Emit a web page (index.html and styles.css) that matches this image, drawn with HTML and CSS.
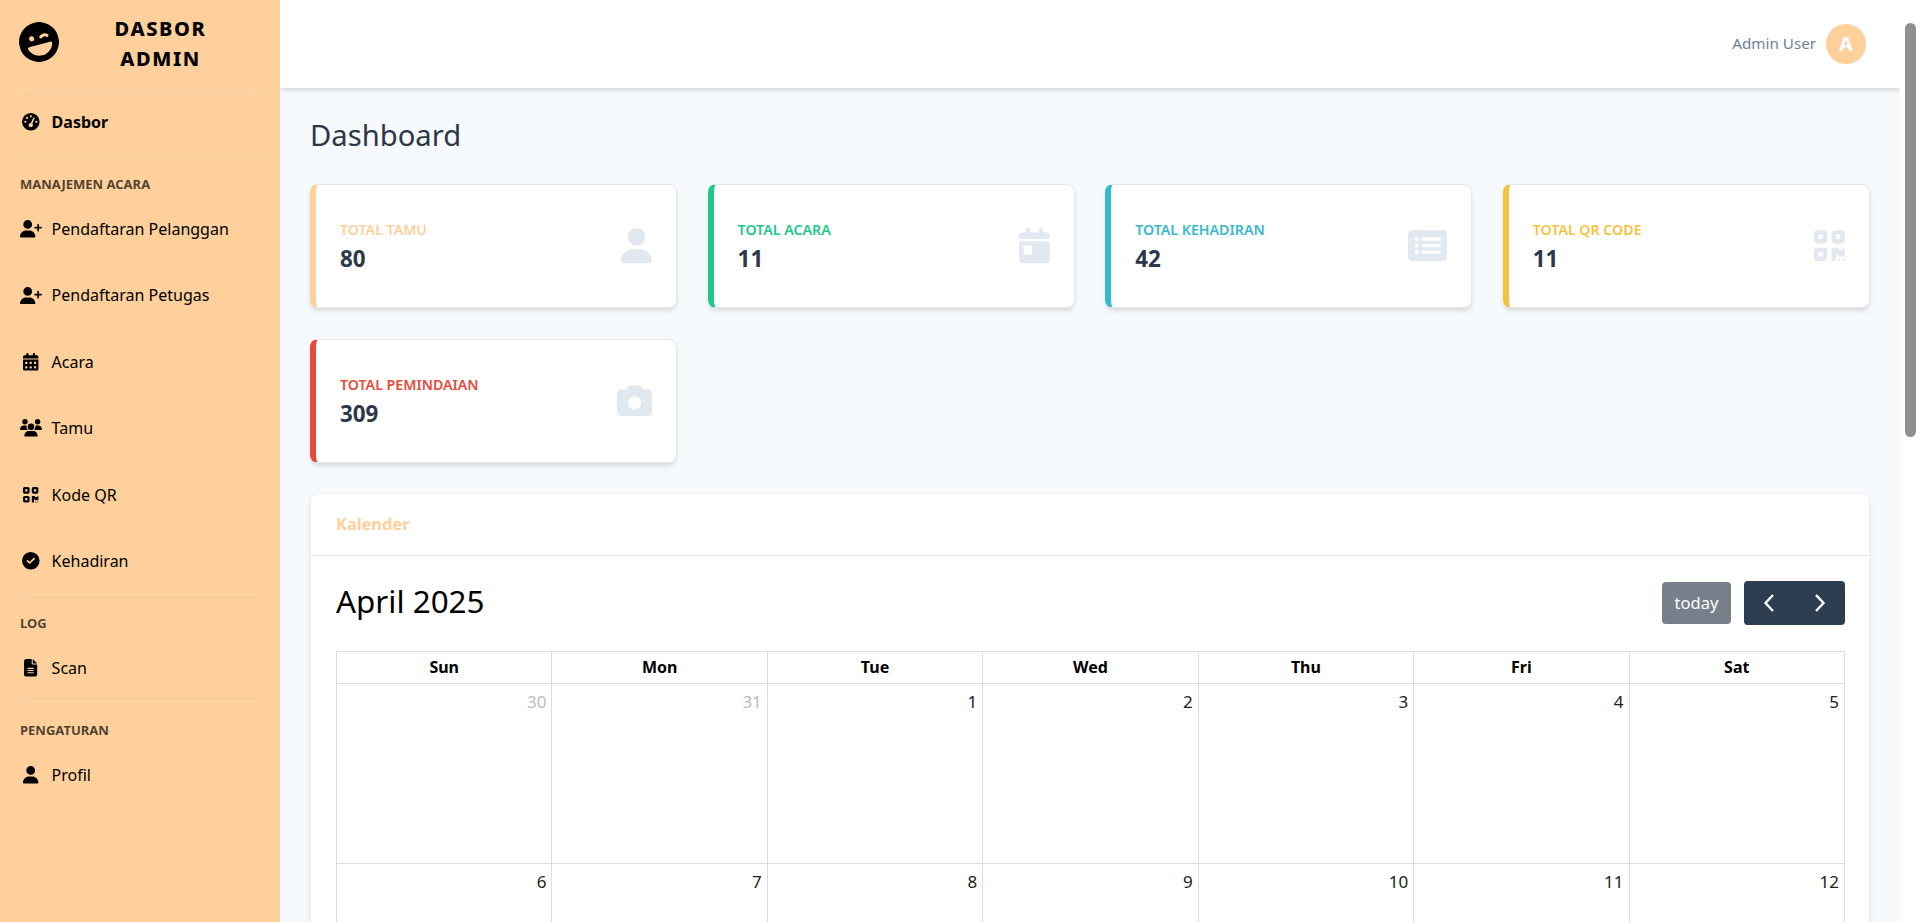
FILE: index.html
```html
<!DOCTYPE html>
<html lang="en">
<head>
  <meta charset="UTF-8">
  <title>Dasbor Admin</title>
  <link rel="stylesheet" href="styles.css">
</head>
<body>
  <aside class="sidebar">
    <a class="brand" href="#">
      <svg class="brand-icon" viewBox="0 0 512 512"><path d="M256 512A256 256 0 1 0 256 0a256 256 0 1 0 0 512zM96.8 314.1c-3.8-13.7 7.4-26.1 21.6-26.1H393.6c14.2 0 25.5 12.4 21.6 26.1C396.2 382 332.1 432 256 432s-140.2-50-159.2-117.9zM144.4 192a32 32 0 1 1 64 0 32 32 0 1 1 -64 0zm165.8 21.7c-7.6 8.1-20.2 8.5-28.3 .9s-8.5-20.2-.9-28.3c14.5-15.5 35.2-22.3 54.6-22.3s40.1 6.8 54.6 22.3c7.6 8.1 7.1 20.7-.9 28.3s-20.7 7.1-28.3-.9c-5.5-5.8-14.8-9.7-25.4-9.7s-19.9 3.8-25.4 9.7z"/></svg>
      <span class="brand-text">DASBOR ADMIN</span>
    </a>
    <hr class="divider">
    <a class="nav-link active" href="#">
      <span class="nav-icon"><svg viewBox="0 0 512 512"><path d="M0 256a256 256 0 1 1 512 0A256 256 0 1 1 0 256zM288 96a32 32 0 1 0 -64 0 32 32 0 1 0 64 0zM256 416c35.3 0 64-28.7 64-64c0-17.4-6.9-33.1-18.1-44.6L366 161.7c5.3-12.1-.2-26.3-12.3-31.6s-26.3 .2-31.6 12.3L257.9 288c-.6 0-1.3 0-1.9 0c-35.3 0-64 28.7-64 64s28.7 64 64 64zM176 144a32 32 0 1 0 -64 0 32 32 0 1 0 64 0zM96 288a32 32 0 1 0 0-64 32 32 0 1 0 0 64zm352-32a32 32 0 1 0 -64 0 32 32 0 1 0 64 0z"/></svg></span>
      Dasbor
    </a>
    <hr class="divider">
    <div class="nav-heading">MANAJEMEN ACARA</div>
    <a class="nav-link" href="#">
      <span class="nav-icon"><svg viewBox="0 0 640 512"><path d="M96 128a128 128 0 1 1 256 0A128 128 0 1 1 96 128zM0 482.3C0 383.8 79.8 304 178.3 304h91.4C368.2 304 448 383.8 448 482.3c0 16.4-13.3 29.7-29.7 29.7H29.7C13.3 512 0 498.7 0 482.3zM504 312V248H440c-13.3 0-24-10.7-24-24s10.7-24 24-24h64V136c0-13.3 10.7-24 24-24s24 10.7 24 24v64h64c13.3 0 24 10.7 24 24s-10.7 24-24 24H552v64c0 13.3-10.7 24-24 24s-24-10.7-24-24z"/></svg></span>
      Pendaftaran Pelanggan
    </a>
    <a class="nav-link" href="#">
      <span class="nav-icon"><svg viewBox="0 0 640 512"><path d="M96 128a128 128 0 1 1 256 0A128 128 0 1 1 96 128zM0 482.3C0 383.8 79.8 304 178.3 304h91.4C368.2 304 448 383.8 448 482.3c0 16.4-13.3 29.7-29.7 29.7H29.7C13.3 512 0 498.7 0 482.3zM504 312V248H440c-13.3 0-24-10.7-24-24s10.7-24 24-24h64V136c0-13.3 10.7-24 24-24s24 10.7 24 24v64h64c13.3 0 24 10.7 24 24s-10.7 24-24 24H552v64c0 13.3-10.7 24-24 24s-24-10.7-24-24z"/></svg></span>
      Pendaftaran Petugas
    </a>
    <a class="nav-link" href="#">
      <span class="nav-icon"><svg viewBox="0 0 448 512"><path d="M128 0c17.7 0 32 14.3 32 32V64H288V32c0-17.7 14.3-32 32-32s32 14.3 32 32V64h48c26.5 0 48 21.5 48 48v48H0V112C0 85.5 21.5 64 48 64H96V32c0-17.7 14.3-32 32-32zM0 192H448V464c0 26.5-21.5 48-48 48H48c-26.5 0-48-21.5-48-48V192zm64 80v32c0 8.8 7.2 16 16 16h32c8.8 0 16-7.2 16-16V272c0-8.8-7.2-16-16-16H80c-8.8 0-16 7.2-16 16zm128 0v32c0 8.8 7.2 16 16 16h32c8.8 0 16-7.2 16-16V272c0-8.8-7.2-16-16-16H208c-8.8 0-16 7.2-16 16zm144-16c-8.8 0-16 7.2-16 16v32c0 8.8 7.2 16 16 16h32c8.8 0 16-7.2 16-16V272c0-8.8-7.2-16-16-16H336zM64 400v32c0 8.8 7.2 16 16 16h32c8.8 0 16-7.2 16-16V400c0-8.8-7.2-16-16-16H80c-8.8 0-16 7.2-16 16zm144-16c-8.8 0-16 7.2-16 16v32c0 8.8 7.2 16 16 16h32c8.8 0 16-7.2 16-16V400c0-8.8-7.2-16-16-16H208zm112 16v32c0 8.8 7.2 16 16 16h32c8.8 0 16-7.2 16-16V400c0-8.8-7.2-16-16-16H336c-8.8 0-16 7.2-16 16z"/></svg></span>
      Acara
    </a>
    <a class="nav-link" href="#">
      <span class="nav-icon"><svg viewBox="0 0 640 512"><path d="M144 0a80 80 0 1 1 0 160A80 80 0 1 1 144 0zM512 0a80 80 0 1 1 0 160A80 80 0 1 1 512 0zM0 298.7C0 239.8 47.8 192 106.7 192h42.7c15.9 0 31 3.5 44.6 9.7c-1.3 7.2-1.9 14.7-1.9 22.3c0 38.2 16.8 72.5 43.3 96c-.2 0-.4 0-.7 0H21.3C9.6 320 0 310.4 0 298.7zM405.3 320c-.2 0-.4 0-.7 0c26.6-23.5 43.3-57.8 43.3-96c0-7.6-.7-15-1.9-22.3c13.6-6.3 28.7-9.7 44.6-9.7h42.7C592.2 192 640 239.8 640 298.7c0 11.8-9.6 21.3-21.3 21.3H405.3zM224 224a96 96 0 1 1 192 0 96 96 0 1 1 -192 0zM128 485.3C128 411.7 187.7 352 261.3 352H378.7C452.3 352 512 411.7 512 485.3c0 14.7-11.9 26.7-26.7 26.7H154.7c-14.7 0-26.7-11.9-26.7-26.7z"/></svg></span>
      Tamu
    </a>
    <a class="nav-link" href="#">
      <span class="nav-icon"><svg viewBox="0 0 448 512"><path d="M0 80C0 53.5 21.5 32 48 32h96c26.5 0 48 21.5 48 48v96c0 26.5-21.5 48-48 48H48c-26.5 0-48-21.5-48-48V80zM64 96v64h64V96H64zM0 336c0-26.5 21.5-48 48-48h96c26.5 0 48 21.5 48 48v96c0 26.5-21.5 48-48 48H48c-26.5 0-48-21.5-48-48V336zm64 16v64h64V352H64zM304 32h96c26.5 0 48 21.5 48 48v96c0 26.5-21.5 48-48 48H304c-26.5 0-48-21.5-48-48V80c0-26.5 21.5-48 48-48zm80 64H320v64h64V96zM256 304c0-8.8 7.2-16 16-16h64c8.8 0 16 7.2 16 16s7.2 16 16 16h32c8.8 0 16-7.2 16-16s7.2-16 16-16s16 7.2 16 16v96c0 8.8-7.2 16-16 16H368c-8.8 0-16-7.2-16-16s-7.2-16-16-16s-16 7.2-16 16v64c0 8.8-7.2 16-16 16H272c-8.8 0-16-7.2-16-16V304zM368 480a16 16 0 1 1 0-32 16 16 0 1 1 0 32zm64 0a16 16 0 1 1 0-32 16 16 0 1 1 0 32z"/></svg></span>
      Kode QR
    </a>
    <a class="nav-link" href="#">
      <span class="nav-icon"><svg viewBox="0 0 512 512"><path d="M256 512A256 256 0 1 0 256 0a256 256 0 1 0 0 512zM369 209L241 337c-9.4 9.4-24.6 9.4-33.9 0l-64-64c-9.4-9.4-9.4-24.6 0-33.9s24.6-9.4 33.9 0l47 47L335 175c9.4-9.4 24.6-9.4 33.9 0s9.4 24.6 0 33.9z"/></svg></span>
      Kehadiran
    </a>
    <hr class="divider">
    <div class="nav-heading">LOG</div>
    <a class="nav-link" href="#">
      <span class="nav-icon"><svg viewBox="0 0 384 512"><path d="M64 0C28.7 0 0 28.7 0 64V448c0 35.3 28.7 64 64 64H320c35.3 0 64-28.7 64-64V160H256c-17.7 0-32-14.3-32-32V0H64zM256 0V128H384L256 0zM112 256H272c8.8 0 16 7.2 16 16s-7.2 16-16 16H112c-8.8 0-16-7.2-16-16s7.2-16 16-16zm0 64H272c8.8 0 16 7.2 16 16s-7.2 16-16 16H112c-8.8 0-16-7.2-16-16s7.2-16 16-16zm0 64H272c8.8 0 16 7.2 16 16s-7.2 16-16 16H112c-8.8 0-16-7.2-16-16s7.2-16 16-16z"/></svg></span>
      Scan
    </a>
    <hr class="divider">
    <div class="nav-heading">PENGATURAN</div>
    <a class="nav-link" href="#">
      <span class="nav-icon"><svg viewBox="0 0 448 512"><path d="M224 256A128 128 0 1 0 224 0a128 128 0 1 0 0 256zm-45.7 48C79.8 304 0 383.8 0 482.3C0 498.7 13.3 512 29.7 512H418.3c16.4 0 29.7-13.3 29.7-29.7C448 383.8 368.2 304 269.7 304H178.3z"/></svg></span>
      Profil
    </a>
  </aside>

  <div class="main">
    <header class="topbar">
      <span class="user-name">Admin User</span>
      <span class="avatar">A</span>
    </header>

    <main class="content">
      <h1 class="page-title">Dashboard</h1>

      <section class="stats">
        <div class="stat-card tamu">
          <div class="stat-text">
            <div class="stat-label">TOTAL TAMU</div>
            <div class="stat-value">80</div>
          </div>
          <svg class="stat-icon" viewBox="0 0 448 512"><path d="M224 256A128 128 0 1 0 224 0a128 128 0 1 0 0 256zm-45.7 48C79.8 304 0 383.8 0 482.3C0 498.7 13.3 512 29.7 512H418.3c16.4 0 29.7-13.3 29.7-29.7C448 383.8 368.2 304 269.7 304H178.3z"/></svg>
        </div>
        <div class="stat-card acara">
          <div class="stat-text">
            <div class="stat-label">TOTAL ACARA</div>
            <div class="stat-value">11</div>
          </div>
          <svg class="stat-icon" viewBox="0 0 448 512"><path d="M128 0c17.7 0 32 14.3 32 32V64H288V32c0-17.7 14.3-32 32-32s32 14.3 32 32V64h48c26.5 0 48 21.5 48 48v48H0V112C0 85.5 21.5 64 48 64H96V32c0-17.7 14.3-32 32-32zM0 192H448V464c0 26.5-21.5 48-48 48H48c-26.5 0-48-21.5-48-48V192zm80 64c-8.8 0-16 7.2-16 16v96c0 8.8 7.2 16 16 16h96c8.8 0 16-7.2 16-16V272c0-8.8-7.2-16-16-16H80z"/></svg>
        </div>
        <div class="stat-card hadir">
          <div class="stat-text">
            <div class="stat-label">TOTAL KEHADIRAN</div>
            <div class="stat-value">42</div>
          </div>
          <svg class="stat-icon" viewBox="0 0 576 512"><path d="M0 96C0 60.7 28.7 32 64 32H512c35.3 0 64 28.7 64 64V416c0 35.3-28.7 64-64 64H64c-35.3 0-64-28.7-64-64V96zM160 256a32 32 0 1 0 -64 0 32 32 0 1 0 64 0zm0-96a32 32 0 1 0 -64 0 32 32 0 1 0 64 0zm0 192a32 32 0 1 0 -64 0 32 32 0 1 0 64 0zM224 136c-13.3 0-24 10.7-24 24s10.7 24 24 24H456c13.3 0 24-10.7 24-24s-10.7-24-24-24H224zm0 96c-13.3 0-24 10.7-24 24s10.7 24 24 24H456c13.3 0 24-10.7 24-24s-10.7-24-24-24H224zm0 96c-13.3 0-24 10.7-24 24s10.7 24 24 24H456c13.3 0 24-10.7 24-24s-10.7-24-24-24H224z"/></svg>
        </div>
        <div class="stat-card qr">
          <div class="stat-text">
            <div class="stat-label">TOTAL QR CODE</div>
            <div class="stat-value">11</div>
          </div>
          <svg class="stat-icon" viewBox="0 0 448 512"><path d="M0 80C0 53.5 21.5 32 48 32h96c26.5 0 48 21.5 48 48v96c0 26.5-21.5 48-48 48H48c-26.5 0-48-21.5-48-48V80zM64 96v64h64V96H64zM0 336c0-26.5 21.5-48 48-48h96c26.5 0 48 21.5 48 48v96c0 26.5-21.5 48-48 48H48c-26.5 0-48-21.5-48-48V336zm64 16v64h64V352H64zM304 32h96c26.5 0 48 21.5 48 48v96c0 26.5-21.5 48-48 48H304c-26.5 0-48-21.5-48-48V80c0-26.5 21.5-48 48-48zm80 64H320v64h64V96zM256 304c0-8.8 7.2-16 16-16h64c8.8 0 16 7.2 16 16s7.2 16 16 16h32c8.8 0 16-7.2 16-16s7.2-16 16-16s16 7.2 16 16v96c0 8.8-7.2 16-16 16H368c-8.8 0-16-7.2-16-16s-7.2-16-16-16s-16 7.2-16 16v64c0 8.8-7.2 16-16 16H272c-8.8 0-16-7.2-16-16V304zM368 480a16 16 0 1 1 0-32 16 16 0 1 1 0 32zm64 0a16 16 0 1 1 0-32 16 16 0 1 1 0 32z"/></svg>
        </div>
        <div class="stat-card scan">
          <div class="stat-text">
            <div class="stat-label">TOTAL PEMINDAIAN</div>
            <div class="stat-value">309</div>
          </div>
          <svg class="stat-icon" viewBox="0 0 512 512"><path d="M149.1 64.8L138.7 96H64C28.7 96 0 124.7 0 160V416c0 35.3 28.7 64 64 64H448c35.3 0 64-28.7 64-64V160c0-35.3-28.7-64-64-64H373.3L362.9 64.8C356.4 45.2 338.1 32 317.4 32H194.6c-20.7 0-39 13.2-45.5 32.8zM256 192a96 96 0 1 1 0 192 96 96 0 1 1 0-192z"/></svg>
        </div>
      </section>

      <section class="calendar-card">
        <div class="calendar-head">Kalender</div>
        <div class="calendar-body">
          <div class="toolbar">
            <h2 class="month-title">April 2025</h2>
            <div class="toolbar-actions">
              <button class="btn-today" disabled>today</button>
              <div class="btn-group">
                <button class="btn-nav"><svg viewBox="0 0 12 20"><path d="M10 2L2.5 10L10 18"/></svg></button>
                <button class="btn-nav"><svg viewBox="0 0 12 20"><path d="M2 2L9.5 10L2 18"/></svg></button>
              </div>
            </div>
          </div>
          <table class="month">
            <thead>
              <tr><th>Sun</th><th>Mon</th><th>Tue</th><th>Wed</th><th>Thu</th><th>Fri</th><th>Sat</th></tr>
            </thead>
            <tbody>
              <tr><td class="other">30</td><td class="other">31</td><td>1</td><td>2</td><td>3</td><td>4</td><td>5</td></tr>
              <tr><td>6</td><td>7</td><td>8</td><td>9</td><td>10</td><td>11</td><td>12</td></tr>
            </tbody>
          </table>
        </div>
      </section>
    </main>
  </div>

  <div class="scroll-rail"><div class="scroll-thumb"></div></div>
</body>
</html>
```

FILE: styles.css
```css
* {
  box-sizing: border-box;
}

body {
  margin: 0;
  display: flex;
  height: 100vh;
  overflow: hidden;
  font-family: "Noto Sans", sans-serif;
  font-size: 16px;
  color: #000;
  background: #fff;
}

/* sidebar */
.sidebar {
  flex: 0 0 280px;
  padding: 0 20px;
  background: #ffd09b;
}

.brand {
  display: flex;
  align-items: center;
  height: 88px;
  color: #000;
  text-decoration: none;
}

.brand-icon {
  flex: none;
  width: 40px;
  height: 40px;
  margin: 0 0 4px -1px;
  transform: rotate(-15deg);
}

.brand-text {
  flex: 1;
  padding: 0 22px 1px 24px;
  font-size: 20px;
  font-weight: 800;
  line-height: 30px;
  letter-spacing: 1.6px;
  text-align: center;
}

.divider {
  height: 1px;
  margin: 0;
  border: 0;
  background: rgba(255, 255, 255, 0.2);
}

.nav-link {
  display: flex;
  align-items: center;
  height: 66.4px;
  color: #000;
  text-decoration: none;
}

.nav-link.active {
  font-weight: 700;
}

.nav-icon {
  display: flex;
  justify-content: center;
  flex: none;
  width: 22px;
  margin-right: 9.6px;
}

.nav-icon svg {
  height: 17.6px;
}

.nav-heading {
  height: 39.5px;
  padding-top: 18px;
  font-size: 13px;
  font-weight: 700;
  line-height: 20px;
  color: rgba(0, 0, 0, 0.7);
}

/* main */
.main {
  flex: 1;
  min-width: 0;
  overflow: hidden;
  background: #f7fafc;
}

.scroll-rail {
  flex: 0 0 20px;
  padding: 23px 4px 0 5px;
  background: #fff;
}

.scroll-thumb {
  height: 414px;
  border-radius: 6px;
  background: #8f8f8f;
}

.topbar {
  display: flex;
  align-items: center;
  justify-content: flex-end;
  height: 88px;
  padding-right: 34px;
  background: #fff;
  box-shadow: 0 4px 6px -1px rgba(0, 0, 0, 0.1), 0 2px 4px -1px rgba(0, 0, 0, 0.06);
}

.user-name {
  margin-right: 10px;
  padding-bottom: 2px;
  font-size: 15.2px;
  color: #718096;
}

.avatar {
  display: flex;
  align-items: center;
  justify-content: center;
  width: 40px;
  height: 40px;
  padding-bottom: 2px;
  border-radius: 50%;
  background: #ffd09b;
  color: #fff;
  font-size: 20px;
  font-weight: 700;
}

.content {
  padding: 30px 30px 0;
}

.page-title {
  margin: 0 0 31px;
  font-size: 29.2px;
  font-weight: 400;
  line-height: 35px;
  color: #2d3748;
}

.stats {
  display: grid;
  grid-template-columns: repeat(4, 1fr);
  gap: 31px 30.4px;
}

.stat-card {
  display: flex;
  align-items: center;
  justify-content: space-between;
  height: 124px;
  padding: 0 24px;
  background: #fff;
  border: 1px solid #e2e8f0;
  border-left: 6px solid;
  border-radius: 8px;
  box-shadow: 0 4px 6px -1px rgba(0, 0, 0, 0.1), 0 2px 4px -1px rgba(0, 0, 0, 0.06);
}

.stat-text {
  padding-top: 2px;
}

.stat-label {
  margin-bottom: 3px;
  font-size: 14.2px;
  font-weight: 600;
  line-height: 20px;
}

.stat-value {
  padding-top: 1px;
  font-size: 22.4px;
  font-weight: 700;
  line-height: 30px;
  color: #2d3748;
}

.stat-icon {
  height: 35.2px;
  fill: #e2e8f0;
}

.tamu { border-left-color: #ffd09b; }
.tamu .stat-label { color: #ffd09b; }
.acara { border-left-color: #1cc88a; }
.acara .stat-label { color: #1cc88a; }
.hadir { border-left-color: #36b9cc; }
.hadir .stat-label { color: #36b9cc; }
.qr { border-left-color: #f6c23e; }
.qr .stat-label { color: #f6c23e; }
.scan { border-left-color: #e74a3b; }
.scan .stat-label { color: #e74a3b; }

/* calendar */
.calendar-card {
  margin-top: 29.5px;
  background: #fff;
  border: 1px solid #edf2f7;
  border-radius: 8px;
  box-shadow: 0 4px 6px -1px rgba(0, 0, 0, 0.1), 0 2px 4px -1px rgba(0, 0, 0, 0.06);
}

.calendar-head {
  height: 62px;
  padding: 0 25px;
  border-bottom: 1px solid #e2e8f0;
  font-size: 16.4px;
  font-weight: 700;
  line-height: 60px;
  color: #ffd09b;
}

.calendar-body {
  padding: 25px 24px 25px 25px;
}

.toolbar {
  display: flex;
  align-items: center;
  justify-content: space-between;
  height: 44px;
  margin-bottom: 26px;
}

.month-title {
  margin: 0;
  padding-bottom: 4px;
  font-size: 31.4px;
  font-weight: 400;
}

.toolbar-actions {
  display: flex;
  align-items: center;
}

.btn-today {
  width: 69px;
  height: 42px;
  margin-right: 13px;
  padding: 0;
  border: 0;
  border-radius: 4px;
  background: #767f8a;
  color: #fff;
  font: inherit;
  font-size: 16.5px;
}

.btn-group {
  display: flex;
}

.btn-nav {
  display: flex;
  align-items: center;
  justify-content: center;
  width: 50.5px;
  height: 44px;
  padding: 0;
  border: 0;
  background: #2c3e50;
}

.btn-nav:first-child {
  border-radius: 4px 0 0 4px;
}

.btn-nav:last-child {
  border-radius: 0 4px 4px 0;
}

.btn-nav svg {
  width: 12px;
  height: 20px;
  fill: none;
  stroke: #fff;
  stroke-width: 2.4;
}

.month {
  width: 100%;
  border-collapse: collapse;
  table-layout: fixed;
}

.month th,
.month td {
  border: 1px solid #ddd;
}

.month th {
  height: 32px;
  padding: 0;
  font-weight: 700;
}

.month td {
  height: 180px;
  padding: 8px 5px;
  color: #222;
  font-size: 17px;
  text-align: right;
  vertical-align: top;
  line-height: 20px;
}

.month td.other {
  color: #bbb;
}
```
